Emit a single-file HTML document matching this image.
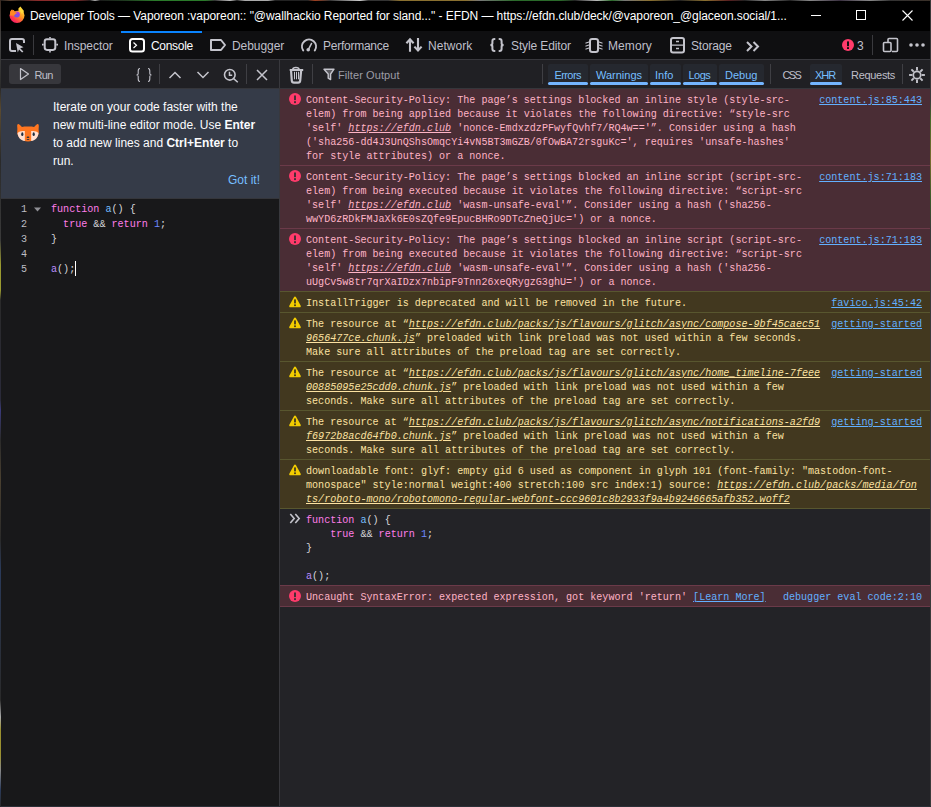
<!DOCTYPE html><html><head><meta charset="utf-8"><style>
html,body{margin:0;padding:0;}
body{width:931px;height:807px;position:relative;overflow:hidden;background:#2f2d2b;font-family:'Liberation Sans', sans-serif;}
.t{position:absolute;white-space:pre;}
.r{position:absolute;display:block;}
.u{text-decoration:underline;text-underline-offset:1px;text-decoration-thickness:1px;}
.i{font-style:italic;}
</style></head><body>
<div class="r" style="left:0;top:0;width:931px;height:1px;background:linear-gradient(90deg,#1a1a1a 0px,#5a4030 10px,#3a2a20 20px,#8a2a2a 38px,#8a2a2a 75px,#1a1a1a 90px,#aaa 95px,#1a1a1a 100px,#1f3a1f 125px,#2a7a2a 155px,#2a7a2a 205px,#333 215px,#bbb 230px,#222 237px,#aaa 245px,#aaa 268px,#222 275px,#222 308px,#a04020 315px,#333 330px,#ccc 360px,#333 368px,#333 388px,#8a7030 400px,#8a7030 465px,#777 480px,#2a6a2a 515px,#2a6a2a 560px,#222 575px,#bbb 597px,#2a6a2a 612px,#777 625px,#8a7030 650px,#222 680px,#8a7030 705px,#5a2020 728px,#222 745px,#888 765px,#222 790px,#888 810px,#3a3040 840px,#888 870px,#333 890px,#3a3028 931px)"></div>
<div class="r" style="left:1px;top:1px;width:929px;height:30px;background:#000000;"></div>
<svg class="r" style="left:9px;top:6px;" width="16" height="17" viewBox="0 0 16 17"><defs><linearGradient id="ffg" x1="1" y1="0" x2="0.2" y2="1"><stop offset="0" stop-color="#fff44f"/><stop offset="0.45" stop-color="#ff9a1f"/><stop offset="0.8" stop-color="#ff3750"/><stop offset="1" stop-color="#f5156c"/></linearGradient>
<linearGradient id="ffp" x1="0.7" y1="0" x2="0.3" y2="1"><stop offset="0" stop-color="#b833e1"/><stop offset="1" stop-color="#5b5fe8"/></linearGradient></defs>
<circle cx="8" cy="9.4" r="7.5" fill="url(#ffg)"/>
<path d="M9.5 3 C10 2 10.6 1 11.5 0.6 C12.3 2 13.5 3.2 15 5 L13 8 Z" fill="#ffd93a"/>
<path d="M3.6 0 H9.4 V5 C8 4.6 6.6 4.9 5.6 5.6 L4.6 4 L3.4 4.4 Z" fill="#000"/>
<circle cx="7.9" cy="8.6" r="3" fill="url(#ffp)"/>
<path d="M1.2 5.5 L2.6 3.6 L3.6 4.8 L4.8 4.2 L6 6 L8.6 7 C7.2 7.2 6.2 8 5.2 9.6 L1 9.4 Z" fill="#ff8a24"/></svg>
<div class="t" style="left:30px;top:7.84px;font-size:12px;line-height:16px;color:#ffffff;font-family:'Liberation Sans', sans-serif;font-weight:normal;letter-spacing:-0.07px;">Developer Tools — Vaporeon :vaporeon:: "@wallhackio Reported for sland..." - EFDN — https://efdn.club/deck/@vaporeon_@glaceon.social/1...</div>
<div class="r" style="left:811px;top:15px;width:10px;height:1px;background:#ffffff;"></div>
<div class="r" style="left:856px;top:10px;width:8px;height:8px;border:1px solid #fff;"></div>
<svg class="r" style="left:902px;top:10px;" width="11" height="11" viewBox="0 0 11 11"><path d="M0.5 0.5 L10.5 10.5 M10.5 0.5 L0.5 10.5" stroke="#fff" stroke-width="1.1"/></svg>
<div class="r" style="left:1px;top:31px;width:929px;height:28px;background:#0f0f11;"></div>
<div class="r" style="left:121px;top:31px;width:81px;height:2px;background:#0a84ff;"></div>
<svg class="r" style="left:8px;top:37px;" width="18" height="16" viewBox="0 0 18 16"><path d="M8 14 H4 a2 2 0 0 1 -2 -2 V4 a2 2 0 0 1 2 -2 H14 a2 2 0 0 1 2 2 V6" fill="none" stroke="#c4c4cc" stroke-width="2"/>
<path d="M8 6 L15.5 10.2 L12.2 11.2 L15.4 14.4 L14.1 15.6 L11 12.4 L9.8 15.4 Z" fill="#c4c4cc"/></svg>
<div class="r" style="left:33px;top:35px;width:1px;height:20px;background:#3a3a3e;"></div>
<svg class="r" style="left:41px;top:36px;" width="18" height="18" viewBox="0 0 18 18"><rect x="3.7" y="3.3" width="10.6" height="10.6" rx="2.3" fill="none" stroke="#c4c4cc" stroke-width="2"/>
<path d="M9 1 V2.5 M9 14.7 V16.5 M1 8.6 H2.7 M15.3 8.6 H17" stroke="#c4c4cc" stroke-width="1.6"/></svg>
<div class="t" style="left:64px;top:37.84px;font-size:12px;line-height:16px;color:#bfbfc9;font-family:'Liberation Sans', sans-serif;font-weight:normal;letter-spacing:-0.08px;">Inspector</div>
<svg class="r" style="left:128px;top:37px;" width="18" height="16" viewBox="0 0 18 16"><rect x="2" y="2" width="14" height="12.5" rx="2.5" fill="none" stroke="#ffffff" stroke-width="2"/>
<path d="M5.5 5.5 L8.5 8.3 L5.5 11" fill="none" stroke="#ffffff" stroke-width="1.2"/></svg>
<div class="t" style="left:151px;top:37.84px;font-size:12px;line-height:16px;color:#fbfbfe;font-family:'Liberation Sans', sans-serif;font-weight:normal;letter-spacing:-0.3px;">Console</div>
<svg class="r" style="left:209px;top:38px;" width="18" height="14" viewBox="0 0 18 14"><path d="M2 2 H12 L16 7 L12 12 H2 Z" fill="none" stroke="#c4c4cc" stroke-width="2" stroke-linejoin="round"/></svg>
<div class="t" style="left:232px;top:37.84px;font-size:12px;line-height:16px;color:#bfbfc9;font-family:'Liberation Sans', sans-serif;font-weight:normal;letter-spacing:-0.05px;">Debugger</div>
<svg class="r" style="left:300px;top:36px;" width="18" height="18" viewBox="0 0 18 18"><path d="M3.2 14.5 A7 7 0 1 1 14.8 14.5" fill="none" stroke="#c4c4cc" stroke-width="2" stroke-linecap="round"/>
<path d="M8.2 13.8 L11.5 7.5" stroke="#c4c4cc" stroke-width="1.6" stroke-linecap="round"/><circle cx="8.2" cy="13.8" r="1.8" fill="#c4c4cc"/></svg>
<div class="t" style="left:323px;top:37.84px;font-size:12px;line-height:16px;color:#bfbfc9;font-family:'Liberation Sans', sans-serif;font-weight:normal;letter-spacing:-0.25px;">Performance</div>
<svg class="r" style="left:405px;top:37px;" width="18" height="17" viewBox="0 0 18 17"><path d="M5 14.7 V2.5 M1.4 6.2 L5 2.3 L8.6 6.2 M13 1 V13.3 M9.4 9.6 L13 13.5 L16.6 9.6" fill="none" stroke="#c4c4cc" stroke-width="2.1"/></svg>
<div class="t" style="left:428px;top:37.84px;font-size:12px;line-height:16px;color:#bfbfc9;font-family:'Liberation Sans', sans-serif;font-weight:normal;letter-spacing:0.05px;">Network</div>
<svg class="r" style="left:488px;top:36px;" width="18" height="18" viewBox="0 0 18 18"><path d="M6.5 2.9 C5.2 2.9 4.4 3.8 4.4 5.2 V7.6 C4.4 8.3 3.8 9 2.4 9 C3.8 9 4.4 9.7 4.4 10.4 V12.8 C4.4 14.2 5.2 15.1 6.5 15.1 M11.5 2.9 C12.8 2.9 13.6 3.8 13.6 5.2 V7.6 C13.6 8.3 14.2 9 15.6 9 C14.2 9 13.6 9.7 13.6 10.4 V12.8 C13.6 14.2 12.8 15.1 11.5 15.1" fill="none" stroke="#c4c4cc" stroke-width="2" stroke-linecap="round"/></svg>
<div class="t" style="left:511px;top:37.84px;font-size:12px;line-height:16px;color:#bfbfc9;font-family:'Liberation Sans', sans-serif;font-weight:normal;letter-spacing:-0.12px;">Style Editor</div>
<svg class="r" style="left:585px;top:37px;" width="18" height="17" viewBox="0 0 18 17"><rect x="5" y="1.9" width="8" height="13" rx="2.2" fill="none" stroke="#c4c4cc" stroke-width="2"/>
<path d="M1 6 L4 5 M1 9 L4 8 M1 12 L4 11 M14 5 L17 6 M14 8 L17 9 M14 11 L17 12" stroke="#c4c4cc" stroke-width="1.3" stroke-linecap="round"/></svg>
<div class="t" style="left:608px;top:37.84px;font-size:12px;line-height:16px;color:#bfbfc9;font-family:'Liberation Sans', sans-serif;font-weight:normal;letter-spacing:0.1px;">Memory</div>
<svg class="r" style="left:669px;top:36px;" width="17" height="18" viewBox="0 0 17 18"><rect x="2" y="2" width="13" height="14.5" rx="2" fill="none" stroke="#c4c4cc" stroke-width="2"/>
<path d="M2 9.2 H15 M7 5.5 H10 M7 12.5 H10" stroke="#c4c4cc" stroke-width="1.3"/></svg>
<div class="t" style="left:691px;top:37.84px;font-size:12px;line-height:16px;color:#bfbfc9;font-family:'Liberation Sans', sans-serif;font-weight:normal;letter-spacing:-0.2px;">Storage</div>
<svg class="r" style="left:745px;top:41px;" width="17" height="11" viewBox="0 0 17 11"><path d="M2 1 L6.5 5.5 L2 10 M8.5 1 L13 5.5 L8.5 10" fill="none" stroke="#c4c4cc" stroke-width="2"/></svg>
<svg class="r" style="left:842px;top:39px;" width="12" height="12" viewBox="0 0 12 12"><circle cx="6" cy="6" r="6" fill="#ff3b6b"/><rect x="5" y="2.4" width="2" height="4.8" fill="#0f0f11"/><rect x="5" y="8.2" width="2" height="1.8" fill="#0f0f11"/></svg>
<div class="t" style="left:857px;top:37.84px;font-size:12px;line-height:16px;color:#bfbfc9;font-family:'Liberation Sans', sans-serif;font-weight:normal;">3</div>
<div class="r" style="left:872px;top:35px;width:1px;height:20px;background:#3a3a3e;"></div>
<svg class="r" style="left:882px;top:37px;" width="17" height="16" viewBox="0 0 17 16"><path d="M6 5.5 V2.5 a1 1 0 0 1 1 -1 H14.5 a1 1 0 0 1 1 1 V13.5 a1 1 0 0 1 -1 1 H10" fill="none" stroke="#c4c4cc" stroke-width="1.6"/>
<rect x="1.5" y="5.5" width="7.5" height="9" rx="1" fill="none" stroke="#c4c4cc" stroke-width="1.6"/></svg>
<svg class="r" style="left:908px;top:42px;" width="18" height="6" viewBox="0 0 18 6"><circle cx="3" cy="3" r="1.8" fill="#c4c4cc"/><circle cx="9" cy="3" r="1.8" fill="#c4c4cc"/><circle cx="15" cy="3" r="1.8" fill="#c4c4cc"/></svg>
<div class="r" style="left:1px;top:59px;width:929px;height:1px;background:#38383d;"></div>
<div class="r" style="left:1px;top:60px;width:929px;height:28px;background:#202024;"></div>
<div class="r" style="left:279px;top:60px;width:1px;height:747px;background:#38383d;"></div>
<div class="r" style="left:9px;top:64px;width:52px;height:20px;background:#37373c;border-radius:3px;"></div>
<svg class="r" style="left:19px;top:67px;" width="11" height="14" viewBox="0 0 11 14"><path d="M1.5 1.5 L9.5 7 L1.5 12.5 Z" fill="none" stroke="#c4c4cc" stroke-width="1.2" stroke-linejoin="round"/></svg>
<div class="t" style="left:34.5px;top:68.19px;font-size:11px;line-height:14px;color:#bfbfc9;font-family:'Liberation Sans', sans-serif;font-weight:normal;letter-spacing:-0.6px;">Run</div>
<svg class="r" style="left:135px;top:67px;" width="18" height="16" viewBox="0 0 18 16"><path d="M5 1.5 C3.2 1.5 3.2 2.5 3.2 4 V6.5 C3.2 7.5 2.6 8 1.5 8 C2.6 8 3.2 8.5 3.2 9.5 V12 C3.2 13.5 3.2 14.5 5 14.5 M13 1.5 C14.8 1.5 14.8 2.5 14.8 4 V6.5 C14.8 7.5 15.4 8 16.5 8 C15.4 8 14.8 8.5 14.8 9.5 V12 C14.8 13.5 14.8 14.5 13 14.5" fill="none" stroke="#c4c4cc" stroke-width="1.1"/></svg>
<div class="r" style="left:159px;top:64px;width:1px;height:20px;background:#3f3f44;"></div>
<svg class="r" style="left:168px;top:70px;" width="14" height="10" viewBox="0 0 14 10"><path d="M1.5 8 L7 2.5 L12.5 8" fill="none" stroke="#c4c4cc" stroke-width="1.5"/></svg>
<svg class="r" style="left:196px;top:70px;" width="14" height="10" viewBox="0 0 14 10"><path d="M1.5 2 L7 7.5 L12.5 2" fill="none" stroke="#c4c4cc" stroke-width="1.5"/></svg>
<svg class="r" style="left:223px;top:68px;" width="17" height="15" viewBox="0 0 17 15"><circle cx="6.8" cy="6.8" r="5.3" fill="none" stroke="#c4c4cc" stroke-width="1.6"/>
<path d="M6.5 3.8 V7.2 H9.2 M10.6 10.6 L14.8 14.2" fill="none" stroke="#c4c4cc" stroke-width="1.5"/></svg>
<div class="r" style="left:246px;top:64px;width:1px;height:20px;background:#3f3f44;"></div>
<svg class="r" style="left:256px;top:69px;" width="12" height="12" viewBox="0 0 12 12"><path d="M1 1 L11 11 M11 1 L1 11" stroke="#c4c4cc" stroke-width="1.5"/></svg>
<svg class="r" style="left:289px;top:66px;" width="16" height="19" viewBox="0 0 16 19"><path d="M0.7 4 H14.2" stroke="#c4c4cc" stroke-width="2"/>
<path d="M3.8 3.4 C3.8 0.8 10 0.8 10 3.4" fill="none" stroke="#c4c4cc" stroke-width="1.6"/>
<path d="M2.1 5 L2.8 14.6 C2.9 16 3.6 16.6 4.9 16.6 H9.1 C10.4 16.6 11.1 16 11.2 14.6 L12.1 5" fill="none" stroke="#c4c4cc" stroke-width="2.2"/>
<path d="M5.5 5.8 V13.3 M7.5 5.8 V13.3 M9.5 5.8 V13.3" stroke="#c4c4cc" stroke-width="1"/></svg>
<div class="r" style="left:312px;top:64px;width:1px;height:20px;background:#3f3f44;"></div>
<svg class="r" style="left:323px;top:68px;" width="12" height="13" viewBox="0 0 12 13"><path d="M1 1.2 H11 L7.6 6 V11.6 L5.2 10.2 V6 Z" fill="#5a5a60" stroke="#c4c4cc" stroke-width="1.4" stroke-linejoin="round"/></svg>
<div class="t" style="left:338px;top:68.19px;font-size:11px;line-height:14px;color:#9d9da6;font-family:'Liberation Sans', sans-serif;font-weight:normal;letter-spacing:0.08px;">Filter Output</div>
<div class="r" style="left:542px;top:64px;width:1px;height:20px;background:#3f3f44;"></div>
<div class="r" style="left:548px;top:64px;width:40px;height:20px;background:#25282f;border-radius:2px 2px 0 0;"></div>
<div class="r" style="left:548px;top:82px;width:40px;height:2.5px;background:#73b5ff;border-radius:2px;"></div>
<div class="t" style="left:554.5px;top:68.19px;font-size:11px;line-height:14px;color:#75bfff;font-family:'Liberation Sans', sans-serif;font-weight:normal;letter-spacing:-0.6px;">Errors</div>
<div class="r" style="left:590px;top:64px;width:58px;height:20px;background:#25282f;border-radius:2px 2px 0 0;"></div>
<div class="r" style="left:590px;top:82px;width:58px;height:2.5px;background:#73b5ff;border-radius:2px;"></div>
<div class="t" style="left:596px;top:68.19px;font-size:11px;line-height:14px;color:#75bfff;font-family:'Liberation Sans', sans-serif;font-weight:normal;">Warnings</div>
<div class="r" style="left:650px;top:64px;width:31px;height:20px;background:#25282f;border-radius:2px 2px 0 0;"></div>
<div class="r" style="left:650px;top:82px;width:31px;height:2.5px;background:#73b5ff;border-radius:2px;"></div>
<div class="t" style="left:655px;top:68.19px;font-size:11px;line-height:14px;color:#75bfff;font-family:'Liberation Sans', sans-serif;font-weight:normal;">Info</div>
<div class="r" style="left:683px;top:64px;width:34px;height:20px;background:#25282f;border-radius:2px 2px 0 0;"></div>
<div class="r" style="left:683px;top:82px;width:34px;height:2.5px;background:#73b5ff;border-radius:2px;"></div>
<div class="t" style="left:688.5px;top:68.19px;font-size:11px;line-height:14px;color:#75bfff;font-family:'Liberation Sans', sans-serif;font-weight:normal;letter-spacing:-0.5px;">Logs</div>
<div class="r" style="left:719px;top:64px;width:45px;height:20px;background:#25282f;border-radius:2px 2px 0 0;"></div>
<div class="r" style="left:719px;top:82px;width:45px;height:2.5px;background:#73b5ff;border-radius:2px;"></div>
<div class="t" style="left:725px;top:68.19px;font-size:11px;line-height:14px;color:#75bfff;font-family:'Liberation Sans', sans-serif;font-weight:normal;">Debug</div>
<div class="r" style="left:770px;top:64px;width:1px;height:20px;background:#3f3f44;"></div>
<div class="t" style="left:782.5px;top:68.19px;font-size:11px;line-height:14px;color:#bfbfc9;font-family:'Liberation Sans', sans-serif;font-weight:normal;letter-spacing:-1.6px;">CSS</div>
<div class="r" style="left:810px;top:64px;width:32px;height:20px;background:#25282f;border-radius:2px 2px 0 0;"></div>
<div class="r" style="left:810px;top:82px;width:32px;height:2.5px;background:#73b5ff;border-radius:2px;"></div>
<div class="t" style="left:815px;top:68.19px;font-size:11px;line-height:14px;color:#75bfff;font-family:'Liberation Sans', sans-serif;font-weight:normal;letter-spacing:-1px;">XHR</div>
<div class="t" style="left:851px;top:68.19px;font-size:11px;line-height:14px;color:#bfbfc9;font-family:'Liberation Sans', sans-serif;font-weight:normal;letter-spacing:-0.3px;">Requests</div>
<div class="r" style="left:902px;top:64px;width:1px;height:20px;background:#3f3f44;"></div>
<svg class="r" style="left:908px;top:66px;" width="18" height="18" viewBox="0 0 18 18"><circle cx="9" cy="9" r="3.7" fill="none" stroke="#c4c4cc" stroke-width="1.7"/><path d="M13.60 9.00 L16.90 9.00" stroke="#c4c4cc" stroke-width="1.9"/><path d="M12.25 12.25 L14.59 14.59" stroke="#c4c4cc" stroke-width="1.9"/><path d="M9.00 13.60 L9.00 16.90" stroke="#c4c4cc" stroke-width="1.9"/><path d="M5.75 12.25 L3.41 14.59" stroke="#c4c4cc" stroke-width="1.9"/><path d="M4.40 9.00 L1.10 9.00" stroke="#c4c4cc" stroke-width="1.9"/><path d="M5.75 5.75 L3.41 3.41" stroke="#c4c4cc" stroke-width="1.9"/><path d="M9.00 4.40 L9.00 1.10" stroke="#c4c4cc" stroke-width="1.9"/><path d="M12.25 5.75 L14.59 3.41" stroke="#c4c4cc" stroke-width="1.9"/></svg>
<div class="r" style="left:1px;top:88px;width:278px;height:0px;background:#202024;"></div>
<div class="r" style="left:1px;top:89px;width:278px;height:109px;background:#353b48;"></div>
<div class="r" style="left:1px;top:198px;width:278px;height:1px;background:#35363b;"></div>
<svg class="r" style="left:16px;top:123px;" width="24" height="19" viewBox="0 0 24 19"><path d="M1.2 3.5 C1 1.5 1.8 0.8 2.5 1 C3.5 1.3 5 3 6 4 C8 3.4 16 3.4 18 4 C19 3 20.5 1.3 21.5 1 C22.2 0.8 23 1.5 22.8 3.5 C22.7 5 22.5 6 22.8 8.5 C23.2 13 18.5 18.5 12 18.5 C5.5 18.5 0.8 13 1.2 8.5 C1.5 6 1.3 5 1.2 3.5 Z" fill="#ff7620"/>
<path d="M1.5 10 C3 8.2 6 7.6 8.8 8 V18 C5 17.6 2 14.8 1.5 10 Z" fill="#ffe0d2"/><path d="M22.5 10 C21 8.2 18 7.6 15.2 8 V18 C19 17.6 22 14.8 22.5 10 Z" fill="#ffe0d2"/>
<ellipse cx="6.3" cy="11.2" rx="1.1" ry="1.9" fill="#1f2e40"/><ellipse cx="17.7" cy="11.2" rx="1.1" ry="1.9" fill="#1f2e40"/>
<ellipse cx="12" cy="14.2" rx="1.4" ry="0.8" fill="#1f2e40"/><path d="M10.8 16.5 H13.2" stroke="#1f2e40" stroke-width="0.8"/></svg>
<div class="t" style="left:53px;top:98.84px;font-size:12px;line-height:16px;color:#fbfbfe;font-family:'Liberation Sans', sans-serif;font-weight:normal;">Iterate on your code faster with the</div>
<div class="t" style="left:53px;top:116.84px;font-size:12px;line-height:16px;color:#fbfbfe;font-family:'Liberation Sans', sans-serif;font-weight:normal;">new multi-line editor mode. Use <b>Enter</b></div>
<div class="t" style="left:53px;top:134.84px;font-size:12px;line-height:16px;color:#fbfbfe;font-family:'Liberation Sans', sans-serif;font-weight:normal;">to add new lines and <b>Ctrl+Enter</b> to</div>
<div class="t" style="left:53px;top:152.84px;font-size:12px;line-height:16px;color:#fbfbfe;font-family:'Liberation Sans', sans-serif;font-weight:normal;">run.</div>
<div class="t" style="left:228px;top:171.84px;font-size:12px;line-height:16px;color:#75bfff;font-family:'Liberation Sans', sans-serif;font-weight:normal;">Got it!</div>
<div class="r" style="left:1px;top:199px;width:278px;height:608px;background:#18181a;"></div>
<div class="t" style="left:21px;top:202.81px;font-size:10.08px;line-height:13px;color:#bdbdc4;font-family:'Liberation Mono', monospace;font-weight:normal;">1</div>
<div class="t" style="left:21px;top:217.81px;font-size:10.08px;line-height:13px;color:#bdbdc4;font-family:'Liberation Mono', monospace;font-weight:normal;">2</div>
<div class="t" style="left:21px;top:232.81px;font-size:10.08px;line-height:13px;color:#bdbdc4;font-family:'Liberation Mono', monospace;font-weight:normal;">3</div>
<div class="t" style="left:21px;top:247.81px;font-size:10.08px;line-height:13px;color:#bdbdc4;font-family:'Liberation Mono', monospace;font-weight:normal;">4</div>
<div class="t" style="left:21px;top:262.81px;font-size:10.08px;line-height:13px;color:#bdbdc4;font-family:'Liberation Mono', monospace;font-weight:normal;">5</div>
<svg class="r" style="left:34px;top:207px;" width="7" height="5" viewBox="0 0 7 5"><path d="M0 0.5 H7 L3.5 4.5 Z" fill="#8f8f95"/></svg>
<div class="t" style="left:51px;top:202.81px;font-size:10.08px;line-height:13px;color:#d7d7db;font-family:'Liberation Mono', monospace;font-weight:normal;"><span style="color:#ff7de9">function</span><span style="color:#d7d7db"> </span><span style="color:#75bfff">a</span><span style="color:#d7d7db">() {</span></div>
<div class="t" style="left:51px;top:217.81px;font-size:10.08px;line-height:13px;color:#d7d7db;font-family:'Liberation Mono', monospace;font-weight:normal;"><span style="color:#d7d7db">  </span><span style="color:#ff7de9">true</span><span style="color:#d7d7db"> &amp;&amp; </span><span style="color:#ff7de9">return</span><span style="color:#d7d7db"> </span><span style="color:#6b89ff">1</span><span style="color:#d7d7db">;</span></div>
<div class="t" style="left:51px;top:232.81px;font-size:10.08px;line-height:13px;color:#d7d7db;font-family:'Liberation Mono', monospace;font-weight:normal;">}</div>
<div class="t" style="left:51px;top:262.81px;font-size:10.08px;line-height:13px;color:#d7d7db;font-family:'Liberation Mono', monospace;font-weight:normal;"><span style="color:#b98eff">a</span><span style="color:#d7d7db">();</span></div>
<div class="r" style="left:75px;top:261px;width:1px;height:15px;background:#ffffff;"></div>
<div class="r" style="left:280px;top:88px;width:650px;height:719px;background:#232327;"></div>
<div class="r" style="left:280px;top:89px;width:650px;height:76px;background:#4a2d35;"></div>
<div class="r" style="left:280px;top:165px;width:650px;height:1px;background:#6b3a49;"></div>
<svg class="r" style="left:289px;top:93px;" width="12" height="12" viewBox="0 0 12 12"><circle cx="6" cy="6" r="6" fill="#ff3b6b"/><rect x="5" y="2.5" width="2" height="4.6" fill="#4a2d35"/><rect x="5" y="8.2" width="2" height="1.9" fill="#4a2d35"/></svg>
<div class="t" style="left:306px;top:93.81px;font-size:10.08px;line-height:13px;color:#ffb3c6;font-family:'Liberation Mono', monospace;font-weight:normal;">Content-Security-Policy: The page’s settings blocked an inline style (style-src-</div>
<div class="t" style="left:306px;top:107.81px;font-size:10.08px;line-height:13px;color:#ffb3c6;font-family:'Liberation Mono', monospace;font-weight:normal;">elem) from being applied because it violates the following directive: “style-src</div>
<div class="t" style="left:306px;top:121.81px;font-size:10.08px;line-height:13px;color:#ffb3c6;font-family:'Liberation Mono', monospace;font-weight:normal;">'self' <span class="u i">https://efdn.club</span> 'nonce-EmdxzdzPFwyfQvhf7/RQ4w=='”. Consider using a hash</div>
<div class="t" style="left:306px;top:135.81px;font-size:10.08px;line-height:13px;color:#ffb3c6;font-family:'Liberation Mono', monospace;font-weight:normal;">('sha256-dd4J3UnQShsOmqcYi4vN5BT3mGZB/0fOwBA72rsguKc=', requires 'unsafe-hashes'</div>
<div class="t" style="left:306px;top:149.81px;font-size:10.08px;line-height:13px;color:#ffb3c6;font-family:'Liberation Mono', monospace;font-weight:normal;">for style attributes) or a nonce.</div>
<div class="t" style="left:819.18px;top:93.81px;font-size:10.08px;line-height:13px;color:#62b0ff;font-family:'Liberation Mono', monospace;font-weight:normal;"><span class="u">content.js:85:443</span></div>
<div class="r" style="left:280px;top:166px;width:650px;height:62px;background:#4a2d35;"></div>
<div class="r" style="left:280px;top:165px;width:650px;height:1px;background:#6b3a49;"></div>
<div class="r" style="left:280px;top:228px;width:650px;height:1px;background:#6b3a49;"></div>
<svg class="r" style="left:289px;top:170px;" width="12" height="12" viewBox="0 0 12 12"><circle cx="6" cy="6" r="6" fill="#ff3b6b"/><rect x="5" y="2.5" width="2" height="4.6" fill="#4a2d35"/><rect x="5" y="8.2" width="2" height="1.9" fill="#4a2d35"/></svg>
<div class="t" style="left:306px;top:170.81px;font-size:10.08px;line-height:13px;color:#ffb3c6;font-family:'Liberation Mono', monospace;font-weight:normal;">Content-Security-Policy: The page’s settings blocked an inline script (script-src-</div>
<div class="t" style="left:306px;top:184.81px;font-size:10.08px;line-height:13px;color:#ffb3c6;font-family:'Liberation Mono', monospace;font-weight:normal;">elem) from being executed because it violates the following directive: “script-src</div>
<div class="t" style="left:306px;top:198.81px;font-size:10.08px;line-height:13px;color:#ffb3c6;font-family:'Liberation Mono', monospace;font-weight:normal;">'self' <span class="u i">https://efdn.club</span> 'wasm-unsafe-eval'”. Consider using a hash ('sha256-</div>
<div class="t" style="left:306px;top:212.81px;font-size:10.08px;line-height:13px;color:#ffb3c6;font-family:'Liberation Mono', monospace;font-weight:normal;">wwYD6zRDkFMJaXk6E0sZQfe9EpucBHRo9DTcZneQjUc=') or a nonce.</div>
<div class="t" style="left:819.18px;top:170.81px;font-size:10.08px;line-height:13px;color:#62b0ff;font-family:'Liberation Mono', monospace;font-weight:normal;"><span class="u">content.js:71:183</span></div>
<div class="r" style="left:280px;top:229px;width:650px;height:62px;background:#4a2d35;"></div>
<div class="r" style="left:280px;top:228px;width:650px;height:1px;background:#6b3a49;"></div>
<div class="r" style="left:280px;top:291px;width:650px;height:1px;background:#6b3a49;"></div>
<svg class="r" style="left:289px;top:233px;" width="12" height="12" viewBox="0 0 12 12"><circle cx="6" cy="6" r="6" fill="#ff3b6b"/><rect x="5" y="2.5" width="2" height="4.6" fill="#4a2d35"/><rect x="5" y="8.2" width="2" height="1.9" fill="#4a2d35"/></svg>
<div class="t" style="left:306px;top:233.81px;font-size:10.08px;line-height:13px;color:#ffb3c6;font-family:'Liberation Mono', monospace;font-weight:normal;">Content-Security-Policy: The page’s settings blocked an inline script (script-src-</div>
<div class="t" style="left:306px;top:247.81px;font-size:10.08px;line-height:13px;color:#ffb3c6;font-family:'Liberation Mono', monospace;font-weight:normal;">elem) from being executed because it violates the following directive: “script-src</div>
<div class="t" style="left:306px;top:261.81px;font-size:10.08px;line-height:13px;color:#ffb3c6;font-family:'Liberation Mono', monospace;font-weight:normal;">'self' <span class="u i">https://efdn.club</span> 'wasm-unsafe-eval'”. Consider using a hash ('sha256-</div>
<div class="t" style="left:306px;top:275.81px;font-size:10.08px;line-height:13px;color:#ffb3c6;font-family:'Liberation Mono', monospace;font-weight:normal;">uUgCv5w8tr7qrXaIDzx7nbipF9Tnn26xeQRygzG3ghU=') or a nonce.</div>
<div class="t" style="left:819.18px;top:233.81px;font-size:10.08px;line-height:13px;color:#62b0ff;font-family:'Liberation Mono', monospace;font-weight:normal;"><span class="u">content.js:71:183</span></div>
<div class="r" style="left:280px;top:292px;width:650px;height:20px;background:#42381f;"></div>
<div class="r" style="left:280px;top:291px;width:650px;height:1px;background:#58562f;"></div>
<div class="r" style="left:280px;top:312px;width:650px;height:1px;background:#58562f;"></div>
<svg class="r" style="left:289px;top:296px;" width="12" height="12" viewBox="0 0 12 12"><path d="M6 0.5 C6.4 0.5 6.7 0.7 6.9 1 L11.7 9.8 C12.1 10.5 11.6 11.3 10.9 11.3 H1.1 C0.4 11.3 -0.1 10.5 0.3 9.8 L5.1 1 C5.3 0.7 5.6 0.5 6 0.5 Z" fill="#f2cc00"/><rect x="5.1" y="3.4" width="1.8" height="4" fill="#42381f"/><rect x="5.1" y="8.4" width="1.8" height="1.7" fill="#42381f"/></svg>
<div class="t" style="left:306px;top:296.81px;font-size:10.08px;line-height:13px;color:#fce2a1;font-family:'Liberation Mono', monospace;font-weight:normal;">InstallTrigger is deprecated and will be removed in the future.</div>
<div class="t" style="left:831.28px;top:296.81px;font-size:10.08px;line-height:13px;color:#62b0ff;font-family:'Liberation Mono', monospace;font-weight:normal;"><span class="u">favico.js:45:42</span></div>
<div class="r" style="left:280px;top:313px;width:650px;height:48px;background:#42381f;"></div>
<div class="r" style="left:280px;top:312px;width:650px;height:1px;background:#58562f;"></div>
<div class="r" style="left:280px;top:361px;width:650px;height:1px;background:#58562f;"></div>
<svg class="r" style="left:289px;top:317px;" width="12" height="12" viewBox="0 0 12 12"><path d="M6 0.5 C6.4 0.5 6.7 0.7 6.9 1 L11.7 9.8 C12.1 10.5 11.6 11.3 10.9 11.3 H1.1 C0.4 11.3 -0.1 10.5 0.3 9.8 L5.1 1 C5.3 0.7 5.6 0.5 6 0.5 Z" fill="#f2cc00"/><rect x="5.1" y="3.4" width="1.8" height="4" fill="#42381f"/><rect x="5.1" y="8.4" width="1.8" height="1.7" fill="#42381f"/></svg>
<div class="t" style="left:306px;top:317.81px;font-size:10.08px;line-height:13px;color:#fce2a1;font-family:'Liberation Mono', monospace;font-weight:normal;">The resource at “<span class="u i">https://efdn.club/packs/js/flavours/glitch/async/compose-9bf45caec51</span></div>
<div class="t" style="left:306px;top:331.81px;font-size:10.08px;line-height:13px;color:#fce2a1;font-family:'Liberation Mono', monospace;font-weight:normal;"><span class="u i">9656477ce.chunk.js</span>” preloaded with link preload was not used within a few seconds.</div>
<div class="t" style="left:306px;top:345.81px;font-size:10.08px;line-height:13px;color:#fce2a1;font-family:'Liberation Mono', monospace;font-weight:normal;">Make sure all attributes of the preload tag are set correctly.</div>
<div class="t" style="left:831.28px;top:317.81px;font-size:10.08px;line-height:13px;color:#62b0ff;font-family:'Liberation Mono', monospace;font-weight:normal;"><span class="u">getting-started</span></div>
<div class="r" style="left:280px;top:362px;width:650px;height:48px;background:#42381f;"></div>
<div class="r" style="left:280px;top:361px;width:650px;height:1px;background:#58562f;"></div>
<div class="r" style="left:280px;top:410px;width:650px;height:1px;background:#58562f;"></div>
<svg class="r" style="left:289px;top:366px;" width="12" height="12" viewBox="0 0 12 12"><path d="M6 0.5 C6.4 0.5 6.7 0.7 6.9 1 L11.7 9.8 C12.1 10.5 11.6 11.3 10.9 11.3 H1.1 C0.4 11.3 -0.1 10.5 0.3 9.8 L5.1 1 C5.3 0.7 5.6 0.5 6 0.5 Z" fill="#f2cc00"/><rect x="5.1" y="3.4" width="1.8" height="4" fill="#42381f"/><rect x="5.1" y="8.4" width="1.8" height="1.7" fill="#42381f"/></svg>
<div class="t" style="left:306px;top:366.81px;font-size:10.08px;line-height:13px;color:#fce2a1;font-family:'Liberation Mono', monospace;font-weight:normal;">The resource at “<span class="u i">https://efdn.club/packs/js/flavours/glitch/async/home_timeline-7feee</span></div>
<div class="t" style="left:306px;top:380.81px;font-size:10.08px;line-height:13px;color:#fce2a1;font-family:'Liberation Mono', monospace;font-weight:normal;"><span class="u i">00885095e25cdd0.chunk.js</span>” preloaded with link preload was not used within a few</div>
<div class="t" style="left:306px;top:394.81px;font-size:10.08px;line-height:13px;color:#fce2a1;font-family:'Liberation Mono', monospace;font-weight:normal;">seconds. Make sure all attributes of the preload tag are set correctly.</div>
<div class="t" style="left:831.28px;top:366.81px;font-size:10.08px;line-height:13px;color:#62b0ff;font-family:'Liberation Mono', monospace;font-weight:normal;"><span class="u">getting-started</span></div>
<div class="r" style="left:280px;top:411px;width:650px;height:48px;background:#42381f;"></div>
<div class="r" style="left:280px;top:410px;width:650px;height:1px;background:#58562f;"></div>
<div class="r" style="left:280px;top:459px;width:650px;height:1px;background:#58562f;"></div>
<svg class="r" style="left:289px;top:415px;" width="12" height="12" viewBox="0 0 12 12"><path d="M6 0.5 C6.4 0.5 6.7 0.7 6.9 1 L11.7 9.8 C12.1 10.5 11.6 11.3 10.9 11.3 H1.1 C0.4 11.3 -0.1 10.5 0.3 9.8 L5.1 1 C5.3 0.7 5.6 0.5 6 0.5 Z" fill="#f2cc00"/><rect x="5.1" y="3.4" width="1.8" height="4" fill="#42381f"/><rect x="5.1" y="8.4" width="1.8" height="1.7" fill="#42381f"/></svg>
<div class="t" style="left:306px;top:415.81px;font-size:10.08px;line-height:13px;color:#fce2a1;font-family:'Liberation Mono', monospace;font-weight:normal;">The resource at “<span class="u i">https://efdn.club/packs/js/flavours/glitch/async/notifications-a2fd9</span></div>
<div class="t" style="left:306px;top:429.81px;font-size:10.08px;line-height:13px;color:#fce2a1;font-family:'Liberation Mono', monospace;font-weight:normal;"><span class="u i">f6972b8acd64fb0.chunk.js</span>” preloaded with link preload was not used within a few</div>
<div class="t" style="left:306px;top:443.81px;font-size:10.08px;line-height:13px;color:#fce2a1;font-family:'Liberation Mono', monospace;font-weight:normal;">seconds. Make sure all attributes of the preload tag are set correctly.</div>
<div class="t" style="left:831.28px;top:415.81px;font-size:10.08px;line-height:13px;color:#62b0ff;font-family:'Liberation Mono', monospace;font-weight:normal;"><span class="u">getting-started</span></div>
<div class="r" style="left:280px;top:460px;width:650px;height:48px;background:#42381f;"></div>
<div class="r" style="left:280px;top:459px;width:650px;height:1px;background:#58562f;"></div>
<div class="r" style="left:280px;top:508px;width:650px;height:1px;background:#58562f;"></div>
<svg class="r" style="left:289px;top:464px;" width="12" height="12" viewBox="0 0 12 12"><path d="M6 0.5 C6.4 0.5 6.7 0.7 6.9 1 L11.7 9.8 C12.1 10.5 11.6 11.3 10.9 11.3 H1.1 C0.4 11.3 -0.1 10.5 0.3 9.8 L5.1 1 C5.3 0.7 5.6 0.5 6 0.5 Z" fill="#f2cc00"/><rect x="5.1" y="3.4" width="1.8" height="4" fill="#42381f"/><rect x="5.1" y="8.4" width="1.8" height="1.7" fill="#42381f"/></svg>
<div class="t" style="left:306px;top:464.81px;font-size:10.08px;line-height:13px;color:#fce2a1;font-family:'Liberation Mono', monospace;font-weight:normal;">downloadable font: glyf: empty gid 6 used as component in glyph 101 (font-family: "mastodon-font-</div>
<div class="t" style="left:306px;top:478.81px;font-size:10.08px;line-height:13px;color:#fce2a1;font-family:'Liberation Mono', monospace;font-weight:normal;">monospace" style:normal weight:400 stretch:100 src index:1) source: <span class="u i">https://efdn.club/packs/media/fon</span></div>
<div class="t" style="left:306px;top:492.81px;font-size:10.08px;line-height:13px;color:#fce2a1;font-family:'Liberation Mono', monospace;font-weight:normal;"><span class="u i">ts/roboto-mono/robotomono-regular-webfont-ccc9601c8b2933f9a4b9246665afb352.woff2</span></div>
<svg class="r" style="left:289px;top:513px;" width="12" height="11" viewBox="0 0 12 11"><path d="M1.3 1 L5.2 5.5 L1.3 10 M6.3 1 L10.2 5.5 L6.3 10" fill="none" stroke="#c4c4cc" stroke-width="1.6"/></svg>
<div class="t" style="left:306px;top:513.81px;font-size:10.08px;line-height:13px;color:#d7d7db;font-family:'Liberation Mono', monospace;font-weight:normal;"><span style="color:#ff7de9">function</span><span style="color:#d7d7db"> </span><span style="color:#75bfff">a</span><span style="color:#d7d7db">() {</span></div>
<div class="t" style="left:306px;top:527.81px;font-size:10.08px;line-height:13px;color:#d7d7db;font-family:'Liberation Mono', monospace;font-weight:normal;"><span style="color:#d7d7db">    </span><span style="color:#ff7de9">true</span><span style="color:#d7d7db"> &amp;&amp; </span><span style="color:#ff7de9">return</span><span style="color:#d7d7db"> </span><span style="color:#6b89ff">1</span><span style="color:#d7d7db">;</span></div>
<div class="t" style="left:306px;top:541.81px;font-size:10.08px;line-height:13px;color:#d7d7db;font-family:'Liberation Mono', monospace;font-weight:normal;">}</div>
<div class="t" style="left:306px;top:569.81px;font-size:10.08px;line-height:13px;color:#d7d7db;font-family:'Liberation Mono', monospace;font-weight:normal;"><span style="color:#b98eff">a</span><span style="color:#d7d7db">();</span></div>
<div class="r" style="left:280px;top:585px;width:650px;height:1px;background:#6b3a49;"></div>
<div class="r" style="left:280px;top:586px;width:650px;height:20px;background:#4a2d35;"></div>
<div class="r" style="left:280px;top:585px;width:650px;height:1px;background:#6b3a49;"></div>
<div class="r" style="left:280px;top:606px;width:650px;height:1px;background:#6b3a49;"></div>
<svg class="r" style="left:289px;top:590px;" width="12" height="12" viewBox="0 0 12 12"><circle cx="6" cy="6" r="6" fill="#ff3b6b"/><rect x="5" y="2.5" width="2" height="4.6" fill="#4a2d35"/><rect x="5" y="8.2" width="2" height="1.9" fill="#4a2d35"/></svg>
<div class="t" style="left:306px;top:590.81px;font-size:10.08px;line-height:13px;color:#ffb3c6;font-family:'Liberation Mono', monospace;font-weight:normal;">Uncaught SyntaxError: expected expression, got keyword 'return' <span class="u" style="color:#62b0ff">[Learn More]</span></div>
<div class="t" style="left:782.9px;top:590.81px;font-size:10.08px;line-height:13px;color:#62b0ff;font-family:'Liberation Mono', monospace;font-weight:normal;">debugger eval code:2:10</div>
<div class="r" style="left:1px;top:88px;width:929px;height:1px;background:#35363b;"></div>
<div class="r" style="left:930px;top:0;width:1px;height:807px;background:linear-gradient(180deg,#3a3a3a 0px,#3a3a3a 100px,#4a6a2a 120px,#7a6a30 160px,#3a5a2a 200px,#3a3a3a 230px,#3a3a3a 807px)"></div>
<div class="r" style="left:0px;top:806px;width:931px;height:1px;background:#2b2f37;"></div>
<div class="r" style="left:0;top:0;width:1px;height:807px;background:linear-gradient(180deg,#3a2a20 0px,#444 40px,#2a2a2a 88px,#5a4a30 110px,#2a2a2a 160px,#3a3a3a 240px,#9a9a30 265px,#9a9a30 290px,#2a2a2a 300px,#2a2a3a 400px,#3a3a7a 410px,#2a2a2a 440px,#4a4030 480px,#2a2a2a 540px,#2a3a5a 570px,#2a2a2a 700px,#aaa 717px,#9a9030 730px,#9a9030 755px,#888 770px,#2a3a5a 790px,#2a2a2a 807px)"></div>
</body></html>
